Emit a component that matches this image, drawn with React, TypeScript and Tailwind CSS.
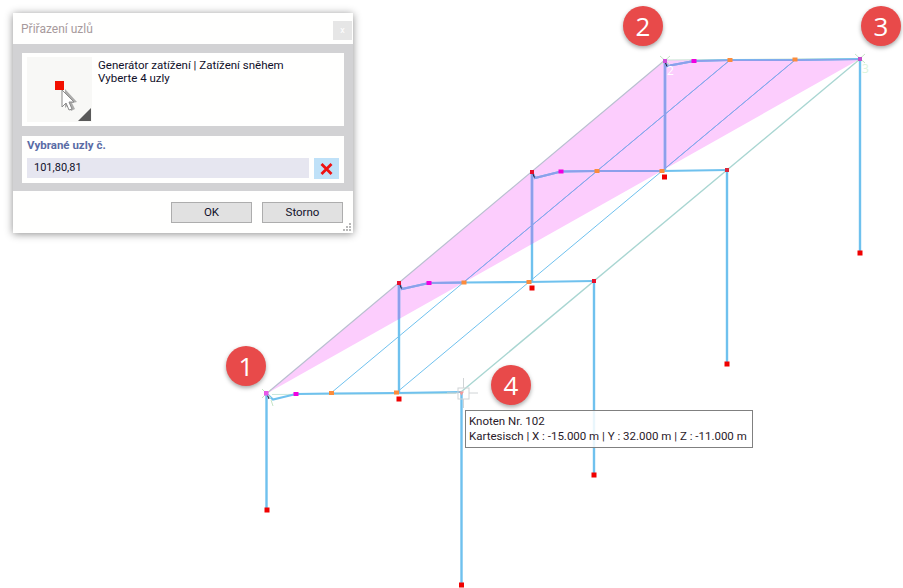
const BLUE = '#6fc1ee';
const PURPLE = '#8c9feb';

// frames: column, rafter kink, purlin nodes
const columns = [
  [266.5, 394, 266.5, 510],
  [399, 283, 399, 393],
  [461.5, 392, 461.5, 585],
  [532, 172, 532, 282],
  [594, 281, 594, 475],
  [665, 61, 665, 171],
  [727, 170, 727, 364],
  [860, 59, 860, 253],
];

const rafters = [
  '267,394 273,399.5 296,394 331,393.5 396,393 461,392',
  '399,283 402,289 429,283 464,282.5 529,282 594,281',
  '532,172 535,178 561,171.5 597,171 662,171 727,170',
  '665,61 667,66 694,61 730,60 795,60 860,59',
];

const purlins = [
  [331, 393, 730, 60],
  [396, 393, 795, 60],
];

const feet = [
  [267, 510],
  [399, 399],
  [461.5, 585],
  [532, 288],
  [594, 475],
  [664.5, 177],
  [727, 364],
  [860, 253],
];

const magenta = [
  [296, 394],
  [429, 283],
  [561, 171.5],
  [694, 61],
];

const orange = [
  [331.5, 393],
  [396.5, 392.5],
  [464, 282.5],
  [529, 282],
  [597, 171],
  [662, 171],
  [730, 60],
  [795, 59.5],
];

const badges = [
  { n: 1, className: 'left-[226px] top-[346px]' },
  { n: 2, className: 'left-[623px] top-[6px]' },
  { n: 3, className: 'left-[861px] top-[6px]' },
  { n: 4, className: 'left-[491px] top-[365px]' },
];

function Beams({ color }: { color: string }) {
  return (
    <g stroke={color} fill="none">
      {purlins.map(([x1, y1, x2, y2]) => (
        <line key={x1} x1={x1} y1={y1} x2={x2} y2={y2} strokeWidth={1} />
      ))}
      {columns.map(([x1, y1, x2, y2]) => (
        <line key={x1} x1={x1} y1={y1} x2={x2} y2={y2} strokeWidth={2.4} />
      ))}
      {rafters.map((points) => (
        <polyline key={points} points={points} strokeWidth={2.2} />
      ))}
    </g>
  );
}

function Model() {
  const loadArea = '266,394 665,60 860,59';
  return (
    <svg className="absolute inset-0" width={903} height={588} viewBox="0 0 903 588">
      <defs>
        <clipPath id="load-area">
          <polygon points={loadArea} />
        </clipPath>
      </defs>
      <polygon points={loadArea} fill="#fccdfd" />
      <line x1={266} y1={394} x2={665} y2={60} stroke="#b9bfd0" strokeWidth={1.2} />
      <line x1={461} y1={392} x2={860} y2={59} stroke="#a9d6d2" strokeWidth={1.4} />
      <line x1={667} y1={60} x2={860} y2={58.5} stroke="#c9e4d4" strokeWidth={1} />
      <line x1={272} y1={394.5} x2={456} y2={393.5} stroke="#c9e8dc" strokeWidth={1} />
      <Beams color={BLUE} />
      <g clipPath="url(#load-area)">
        <Beams color={PURPLE} />
      </g>
      {/* local axis ticks */}
      <g stroke="#1c1c2c" strokeWidth={1} fill="none">
        <path d="M267.5 395.5l1.5 3.5" />
        <path d="M400 285l1.5 3.5" />
        <path d="M533 174l1.5 3.5" />
        <path d="M665.5 63l1.5 3.5" />
      </g>
      <g stroke="#c6e4c6" strokeWidth={1}>
        <path d="M262 398l9-9M262 389l9 9M271 400l2 6" />
        <path d="M660 56l10 9M670 56l-10 9" />
        <path d="M855 54l10 9M865 54l-10 9" />
      </g>
      {feet.map(([x, y]) => (
        <rect key={x} x={x - 2.5} y={y - 2.5} width={5} height={5} fill="#f00000" />
      ))}
      {magenta.map(([x, y]) => (
        <rect key={x} x={x - 2.5} y={y - 2} width={5} height={4} fill="#f000e0" />
      ))}
      {orange.map(([x, y]) => (
        <rect key={x} x={x - 2.5} y={y - 2} width={5} height={4} fill="#fb8c3c" />
      ))}
      {/* support nodes */}
      <rect x={397} y={281} width={4} height={4} fill="#e8102c" />
      <rect x={530} y={170} width={4} height={4} fill="#e8102c" />
      <rect x={592} y={279} width={4} height={4} fill="#e8102c" />
      <rect x={725} y={168} width={4} height={4} fill="#d8283c" />
      <rect x={264} y={391} width={4.5} height={4.5} fill="#e858e8" />
      <rect x={663} y={59} width={4} height={4} fill="#d050d8" />
      <rect x={858} y={57} width={4} height={4} fill="#c050c8" />
      {/* snap cursor over node 102 */}
      <path d="M459 391.5l2.5 4 2.5-4z" fill="#f29a9a" />
      <g stroke="#d0d4d6" fill="none" strokeWidth={1}>
        <rect x={458} y={388} width={11} height={11} />
        <path d="M463.5 378v10M463.5 399v9M447 393h11M469 393h9" />
      </g>
      <text x={667} y={75} fontSize={12} fill="#ffffff" fontFamily="'Open Sans', sans-serif">
        2
      </text>
      <text x={862} y={73} fontSize={12} fill="#dcf5dc" fontFamily="'Open Sans', sans-serif">
        3
      </text>
    </svg>
  );
}

function CursorIcon() {
  return (
    <svg className="absolute inset-0" width={65} height={65} viewBox="0 0 65 65">
      <path d="M38 32l12 13-5 1 3 6-4 2-3-6-3 3z" fill="#7a7a7a" opacity={0.6} />
      <rect x={28} y={24} width={9} height={9} fill="#f21000" />
      <path d="M35 33v17l4-4 3 7 3-1-3-7h5z" fill="#ffffff" stroke="#8a8a8a" strokeWidth={1} />
      <path d="M64 51v13h-13z" fill="#595959" />
    </svg>
  );
}

function Dialog() {
  return (
    <div className="absolute left-[13px] top-[13px] flex h-[220px] w-[340px] flex-col bg-[#fffffe] shadow-[0_1px_8px_rgba(0,0,0,0.45)]">
      <div className="flex h-[31px] shrink-0 items-start justify-between pl-2 pr-px pt-2">
        <span className="text-[12px] leading-4 text-[#a79a9c]">Přiřazení uzlů</span>
        <span className="flex h-[19px] w-[19px] items-center justify-center bg-[#e6e6e6] text-[9px] text-white">x</span>
      </div>
      <div className="flex h-[147px] shrink-0 flex-col gap-[10px] bg-[#d2d2d4] px-[9px] pt-[9px]">
        <div className="flex h-[73px] gap-[6px] bg-[#fffffe] py-[4px] pl-[5px]">
          <div className="relative h-[65px] w-[65px] bg-[#f8f8f6]">
            <CursorIcon />
          </div>
          <div className="pt-[2px] text-[11.5px] leading-[13px] text-[#10102a]">
            <p>Generátor zatížení | Zatížení sněhem</p>
            <p>Vyberte 4 uzly</p>
          </div>
        </div>
        <div className="flex h-[47px] flex-col gap-[4px] bg-[#fffffe] px-[5px] pt-px">
          <span className="text-[11.5px] font-bold leading-[17px] text-[#5a6ca6]">Vybrané uzly č.</span>
          <div className="flex items-start gap-[5px]">
            <div className="flex h-5 w-[282px] items-center bg-[#e6e6f0] pl-[7px] text-[11px] text-[#10102a]">101,80,81</div>
            <button className="flex h-[21px] w-[25px] items-center justify-center bg-[#bfe1f8]">
              <svg width={13} height={12} viewBox="0 0 13 12">
                <path d="M1.5 1l10 10M11.5 1l-10 10" stroke="#ee1111" strokeWidth={2.8} />
              </svg>
            </button>
          </div>
        </div>
      </div>
      <div className="relative flex flex-1 justify-end gap-[10px] pr-[10px] pt-[11px]">
        <button className="h-[21px] w-[81px] border border-[#adadad] bg-[#e1e1e1] text-[11.5px] leading-none text-[#10102a]">OK</button>
        <button className="h-[21px] w-[81px] border border-[#adadad] bg-[#e1e1e1] text-[11.5px] leading-none text-[#10102a]">Storno</button>
        <svg className="absolute bottom-[2px] right-[2px]" width={8} height={8} viewBox="0 0 8 8" fill="#b8b8b8">
          <rect x={6} y={0} width={2} height={2} />
          <rect x={3} y={3} width={2} height={2} />
          <rect x={6} y={3} width={2} height={2} />
          <rect x={0} y={6} width={2} height={2} />
          <rect x={3} y={6} width={2} height={2} />
          <rect x={6} y={6} width={2} height={2} />
        </svg>
      </div>
    </div>
  );
}

export default function App() {
  return (
    <div className="relative h-[588px] w-[903px] overflow-hidden bg-white font-['Roboto',sans-serif]">
      <Model />
      <Dialog />
      {badges.map((b) => (
        <div
          key={b.n}
          className={`absolute flex h-10 w-10 items-center justify-center rounded-full bg-[#e84a4a] text-[26px] font-['Open_Sans',sans-serif] leading-none text-white shadow-[0_2px_4px_rgba(0,0,0,0.35)] ${b.className}`}
        >
          {b.n}
        </div>
      ))}
      <div className="absolute left-[465px] top-[410px] flex h-[38px] w-[288px] flex-col justify-center whitespace-nowrap border border-[#808080] bg-white/85 pl-[3px] text-[11.5px] leading-[15px] text-[#2a1a2a]">
        <span>Knoten Nr. 102</span>
        <span>Kartesisch | X : -15.000 m | Y : 32.000 m | Z : -11.000 m</span>
      </div>
    </div>
  );
}
